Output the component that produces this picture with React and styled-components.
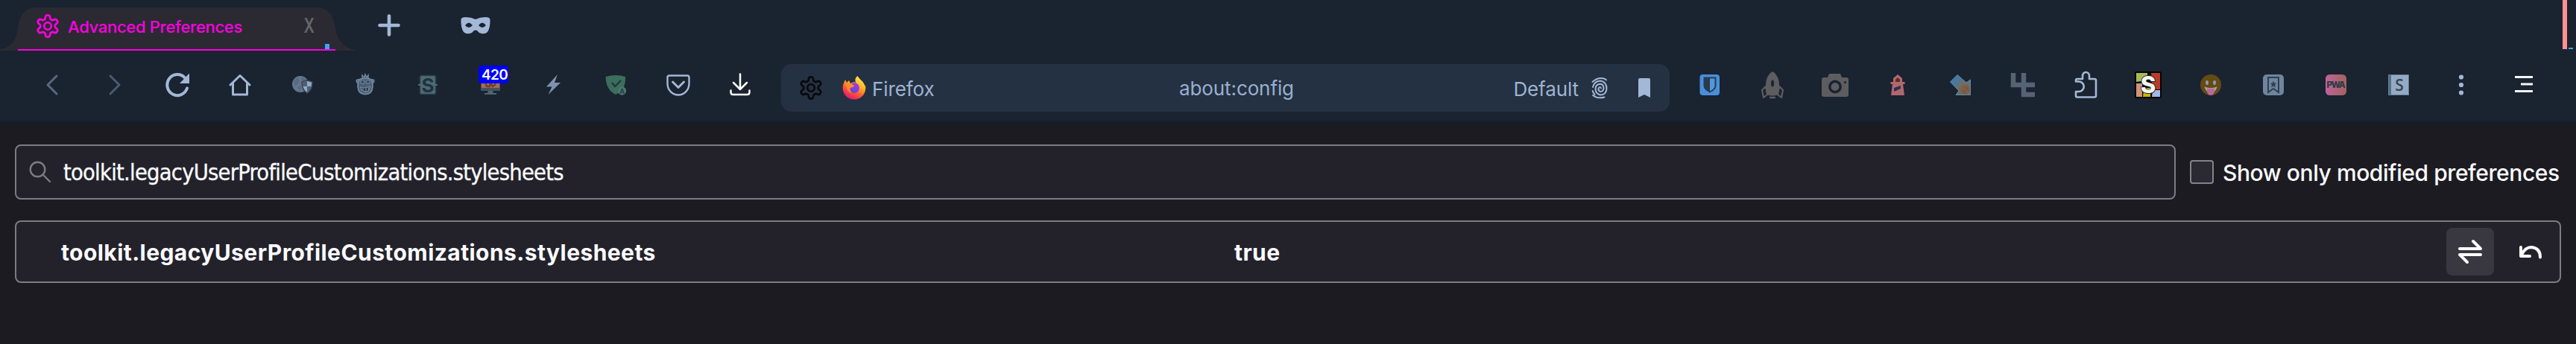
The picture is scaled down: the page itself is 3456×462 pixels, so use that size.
import React from "react";
import styled, { createGlobalStyle } from "styled-components";

const GlobalStyle = createGlobalStyle`
  * { box-sizing: border-box; }
  body { margin: 0; background: #1c1b22; overflow: hidden; font-family: Inter, "Liberation Sans", sans-serif; }
`;

const Window = styled.div`
  width: 3456px;
  height: 462px;
  background: #1c1b22;
  overflow: hidden;
`;

const TabStrip = styled.header`
  position: relative;
  display: flex;
  align-items: flex-start;
  height: 68px;
  background: #1a2330;
`;

const Tab = styled.div`
  position: relative;
  display: flex;
  align-items: center;
  width: 478px;
  height: 68px;
  padding: 2px 54px 0 44px;
  color: #ff00e0;
`;

const TabShape = styled.svg`
  position: absolute;
  left: 0;
  top: 0;
`;

const TabIcon = styled.svg`
  position: relative;
  width: 40px;
  height: 40px;
`;

const TabTitle = styled.span`
  position: relative;
  margin-left: 7px;
  padding-top: 2px;
  font-size: 22px;
  font-weight: 500;
  line-height: 30px;
  letter-spacing: -0.3px;
  white-space: nowrap;
`;

const TabClose = styled.span`
  position: relative;
  margin-left: auto;
  color: #66666a;
  font-size: 27px;
  font-weight: 600;
  line-height: 30px;
  transform: scaleX(0.74);
`;

const StripButton = styled.div`
  display: flex;
  align-items: center;
  justify-content: center;
  width: 88px;
  height: 68px;
  margin-right: ${(p) => p.$gap || 0}px;
`;

const StripEnd = styled.div`
  display: flex;
  align-items: flex-end;
  gap: 2px;
  margin-left: auto;
  padding-right: 4px;
  height: 66px;
`;

const StripMark = styled.div`
  width: 6px;
  height: ${(p) => p.$h}px;
  background: ${(p) => p.$color};
`;

const Toolbar = styled.nav`
  display: flex;
  align-items: center;
  height: 98px;
  padding: 0 28px 6px;
  background: linear-gradient(#1a2330 94px, #171d2a 94px);
`;

const ToolButton = styled.div`
  display: flex;
  align-items: center;
  justify-content: center;
  position: relative;
  flex: none;
  width: 84px;
  height: 84px;
`;

const Glyph = styled.svg`
  flex: none;
  width: 40px;
  height: 40px;
  overflow: visible;
`;

const Badge = styled.span`
  position: absolute;
  left: 26px;
  top: 16px;
  width: 40px;
  height: 24px;
  padding-left: 4px;
  overflow: hidden;
  border-radius: 4px;
  background: #0000ff;
  color: #fff;
  font-size: 19px;
  font-weight: 600;
  line-height: 25px;
  letter-spacing: -0.6px;
`;

const UrlBar = styled.div`
  display: flex;
  align-items: center;
  flex: none;
  width: 1192px;
  height: 64px;
  margin: 8px 12px 0;
  padding: 0 14px 0 20px;
  border-radius: 14px;
  background: #243142;
  color: #9fb3d1;
  font-size: 26px;
  line-height: 32px;
  letter-spacing: -0.1px;
`;

const Identity = styled.div`
  display: flex;
  align-items: center;
  flex: none;
  width: 514px;
`;

const IdentityLabel = styled.span`
  margin-left: 4px;
  padding-top: 3px;
`;

const Address = styled.span`
  padding-top: 1px;
  color: #9ab0d0;
`;

const UrlActions = styled.div`
  display: flex;
  align-items: center;
  margin-left: auto;
`;

const ContainerName = styled.span`
  padding-top: 3px;
  margin-right: 8px;
`;

const UrlIcon = styled(Glyph)`
  margin-left: ${(p) => p.$gap || 0}px;
`;

const Content = styled.main`
  padding: 28px 20px 0;
  color: #fbfbfe;
`;

const SearchRow = styled.div`
  display: flex;
  align-items: center;
  height: 74px;
`;

const SearchBox = styled.div`
  display: flex;
  align-items: center;
  flex: none;
  width: 2899px;
  height: 74px;
  padding-left: 12px;
  border: 2px solid #7c7b82;
  border-radius: 8px;
  background: #23222b;
`;

const Query = styled.span`
  margin-left: 11px;
  padding-top: 2px;
  font-family: "DejaVu Sans Condensed", "DejaVu Sans", sans-serif;
  font-stretch: condensed;
  font-size: 30.5px;
  line-height: 40px;
  letter-spacing: -0.74px;
  white-space: nowrap;
  -webkit-text-stroke: 0.3px #fbfbfe;
`;

const CheckBox = styled.span`
  flex: none;
  width: 32px;
  height: 32px;
  margin-left: 19px;
  border: 2px solid #84838a;
  border-radius: 4px;
  background: #2b2a33;
`;

const CheckLabel = styled.span`
  margin-left: 12px;
  padding-top: 2px;
  font-size: 30px;
  font-weight: 500;
  line-height: 40px;
  letter-spacing: -0.42px;
  white-space: nowrap;
`;

const PrefRow = styled.div`
  display: flex;
  align-items: center;
  height: 84px;
  margin-top: 28px;
  padding: 0 8px 0 60px;
  border: 2px solid #7c7b82;
  border-radius: 8px;
  background: #23222b;
  font-size: 30px;
  font-weight: 700;
  line-height: 40px;
  letter-spacing: 0.43px;
`;

const PrefName = styled.span`
  width: 1574px;
  padding-top: 2px;
`;

const PrefValue = styled.span`
  padding-top: 2px;
`;

const PrefActions = styled.div`
  display: flex;
  gap: 17px;
  margin-left: auto;
  margin-right: -1px;
`;

const PrefButton = styled.div`
  display: flex;
  align-items: center;
  justify-content: center;
  width: 64px;
  height: 64px;
  border-radius: 8px;
  background: ${(p) => (p.$active ? "#393841" : "transparent")};
`;

const box = "-20 -20 40 40";
const ink = "#a3b8d6";

const gearPath = (() => {
  const pts = [];
  const n = 72;
  for (let i = 0; i < n; i++) {
    const a = (i / n) * Math.PI * 2 - Math.PI / 2;
    const w = Math.cos(6 * (a + Math.PI / 2));
    const r = 12.2 + 2.5 * Math.tanh(w * 2);
    pts.push(`${(r * Math.cos(a)).toFixed(2)} ${(r * Math.sin(a)).toFixed(2)}`);
  }
  return `M${pts.join("L")}Z`;
})();

const Gear = ({ color }) => (
  <g fill="none" stroke={color} strokeWidth="2.7" strokeLinejoin="round">
    <path d={gearPath} />
    <circle r="4.8" />
  </g>
);

const Back = () => (
  <path d="M6 -12L-6 0L6 12" fill="none" stroke="#59697f" strokeWidth="3" strokeLinecap="round" strokeLinejoin="round" />
);
const Forward = () => (
  <path d="M-6 -12L6 0L-6 12" fill="none" stroke="#4a5a70" strokeWidth="3" strokeLinecap="round" strokeLinejoin="round" />
);
const Reload = () => (
  <>
    <path d="M13 4.5A13.7 14 0 1 1 10 -9.5" fill="none" stroke={ink} strokeWidth="4" strokeLinecap="round" />
    <path d="M16 -15.5V-2H3Z" fill={ink} />
  </>
);
const Home = () => (
  <path d="M-13 0L0 -12.5L13 0M-9.5 -3V13H9.5V-3" fill="none" stroke={ink} strokeWidth="3" strokeLinecap="round" strokeLinejoin="round" />
);
const Globe = () => (
  <>
    <circle cx="-3" cy="-1" r="11" fill="#63788e" />
    <path d="M-12 -5L-6 -10L-4 -4L-10 2ZM0 -11L5 -7L2 -3L-2 -6ZM-7 3L-1 1L-3 9Z" fill="#566b81" />
    <path d="M-1 -4L6 -6L13 -4C13 4 11 8 6 11C1 8 -1 4 -1 -4Z" fill="#92a9c4" stroke="#3c414b" strokeWidth="1.6" />
    <path d="M6 -5V2H0L-.3 -3.4ZM6 2H12C11 6 9 8 6 9.6Z" fill="#4c6178" />
  </>
);
const Monkey = () => (
  <g stroke="#70859c">
    <path d="M-4 -9L-4 -13L-1 -10L0 -14L2 -10L4 -13L4 -9" fill="none" strokeWidth="1.5" />
    <circle cx="-9.5" cy="-5" r="2.3" fill="#526579" strokeWidth="1.5" />
    <circle cx="9.5" cy="-5" r="2.3" fill="#526579" strokeWidth="1.5" />
    <path d="M-9.5 -3Q-9.5 -9 0 -9T9.5 -3Q10 -1 9.8 3Q9 12.5 0 12.5Q-9 12.5 -9.8 3Q-10 -1 -9.5 -3Z" fill="#4a5e73" strokeWidth="2" />
    <circle cx="-3.7" cy="-4" r="2.5" fill="#33475b" strokeWidth="1.2" />
    <circle cx="3.7" cy="-4" r="2.5" fill="#33475b" strokeWidth="1.2" />
    <path d="M-6.5 3Q0 5 6.5 2Q6 9 1 9Q-5 9 -6.5 3Z" fill="#253548" strokeWidth="1.3" />
    <path d="M-3 4V7M1 4V9M4.5 3.5V7" strokeWidth="1.2" />
  </g>
);
const Script = () => (
  <>
    <rect x="-10.5" y="-12.5" width="21" height="25" rx="2" fill="#4e6b70" stroke="#29414e" strokeWidth="1.5" />
    <path d="M-13 0H13" stroke="#4e6b70" strokeWidth="2" />
    <text y="9.5" textAnchor="middle" fontFamily="Inter" fontSize="26" fontWeight="700" fill="#203142">S</text>
  </>
);
const Monitor = () => (
  <>
    <rect x="-13" y="-11" width="26" height="19" fill="#435361" />
    <rect x="-12" y="-6" width="24" height="10" fill="#a96764" />
    <path d="M-7 -3L-5 2H-1L0 -3L3 2L6 0L7 -4" fill="none" stroke="#694324" strokeWidth="2.4" />
    <path d="M-3 8H3L4 11H8V13H-8V11H-4Z" fill="#526371" />
  </>
);
const Bolt = () => <path d="M6 -14L-9 2.5H-1.5L-6.5 13L10 -3H2Z" fill="#7f92ad" />;
const Shield = () => (
  <>
    <path d="M-13.5 -11Q0 -15 13 -11Q14 7 0 13Q-13 7 -13.5 -11Z" fill="#3b6e5b" />
    <path d="M-5 -3L-1 2L7 -6" fill="none" stroke="#253646" strokeWidth="2.4" />
    <circle cx="8.5" cy="8" r="5.7" fill="#47786b" />
    <text x="8.5" y="11.5" textAnchor="middle" fontFamily="Inter" fontSize="9" fontWeight="700" fill="#263b49">A</text>
  </>
);
const Pocket = () => (
  <g fill="none" stroke={ink} strokeLinecap="round" strokeLinejoin="round">
    <path d="M-12 -12.5H12Q14.5 -12.5 14.5 -10V-2C14.5 7 8 13.5 0 13.5S-14.5 7 -14.5 -2V-10Q-14.5 -12.5 -12 -12.5Z" strokeWidth="2.4" />
    <path d="M-7.5 -4L0 3.5L7.5 -4" strokeWidth="3" />
  </g>
);
const Download = () => (
  <path d="M-1 -14.5V5M-10 -3L-1 6L8 -3M-13.5 7.5V10Q-13.5 13 -10.5 13H8.5Q11.5 13 11.5 10V7.5" fill="none" stroke="#fff" strokeWidth="2.5" strokeLinecap="round" strokeLinejoin="round" />
);
const Bitwarden = () => (
  <>
    <rect x="-13.5" y="-14" width="26.5" height="28" rx="4" fill="#488fdb" />
    <path d="M-8.5 -10.5H8.5V1C8.5 6 3 9 0 10.5C-3 9 -8.5 6 -8.5 1Z" fill="#293b4c" />
    <path d="M0 -8.5H6.5V1C6.5 4.5 3 7 0 8.3Z" fill="#5197df" />
  </>
);
const Rocket = () => (
  <>
    <path d="M-8 13L-9 0C-9 -9 -5 -15 0 -18C5 -15 9 -9 9 0L8 13Q0 16 -8 13Z" fill="#5d5d60" />
    <ellipse cy="-2" rx="2" ry="4.5" fill="#1a2330" />
    <path d="M-9 2L-14 7L-12 17L-7 13ZM9 2L14 7L12 17L7 13Z" fill="#1a2330" stroke="#5d5d60" strokeWidth="2.2" strokeLinejoin="round" />
    <path d="M-3 17H3" stroke="#5d5d60" strokeWidth="2.4" strokeLinecap="round" />
  </>
);
const Camera = () => (
  <>
    <path d="M-15 -10H-10L-8 -15H7L9 -10H15Q18 -10 18 -7V13Q18 16 15 16H-15Q-18 16 -18 13V-7Q-18 -10 -15 -10Z" fill="#5d5d60" />
    <circle cy="2.5" r="7.2" fill="none" stroke="#1a2330" strokeWidth="3.5" />
    <circle cx="13.5" cy="-3.5" r="1.5" fill="#1a2330" />
  </>
);
const Lighthouse = () => (
  <>
    <path d="M-9 14L-7 -1H-9.5V-4H-6V-9L0 -14L6 -9V-4H9.5V-1H7L9 14Z" fill="#b16770" />
    <path d="M-3 -4V-7Q0 -12 3 -7V-4Z" fill="#51351c" />
    <path d="M-5 4L4 1V5L-5 9Z" fill="#293443" />
  </>
);
const SwiftArrow = () => (
  <>
    <defs>
      <radialGradient id="arrowFill" cx="0.75" cy="0.75" r="0.65">
        <stop offset="0" stopColor="#79502f" />
        <stop offset="0.5" stopColor="#736d64" />
        <stop offset="1" stopColor="#4779a0" />
      </radialGradient>
    </defs>
    <path d="M-13.5 -4L-4 -13.5L8 -3L13.5 -7V13.5H-6L-2 8Z" fill="url(#arrowFill)" stroke="#568bb3" strokeWidth="1" />
    <path d="M4 4L12 12" stroke="#a6653b" strokeWidth="1.5" strokeDasharray="2 1" />
  </>
);
const Pipes = () => (
  <path d="M-13 -16V0H16M1 -16V13H16M1 0" fill="none" stroke="#556375" strokeWidth="6.5" />
);
const Puzzle = () => (
  <path d="M-13 -6V-4.5H-9A5.8 5.8 0 0 1 -9 9H-13V14.5Q-13 16.5 -11 16.5H12Q14 16.5 14 14.5V-6Q14 -8 12 -8H5V-12A4.5 5 0 0 0 -4 -12V-8H-11Q-13 -8 -13 -6Z" fill="none" stroke={ink} strokeWidth="2.6" strokeLinejoin="round" />
);
const Stylus = () => (
  <>
    <rect x="-18" y="-18" width="36" height="36" rx="2" fill="#050505" />
    <path d="M-16 -16H-1V-6L-16 -4Z" fill="#a9b950" />
    <path d="M4 -16H16V6H6Z" fill="#b93b2c" />
    <path d="M-16 -2H-8V16H-16Z" fill="#d09478" />
    <path d="M6 7H16V16H5Z" fill="#a1b8e8" />
    <path d="M-6 4H3V16H-7Z" fill="#c8b700" />
    <text y="11" textAnchor="middle" fontFamily="Inter" fontSize="31" fontWeight="800" fill="#f5f5f5" stroke="#222" strokeWidth="1.8" paintOrder="stroke">S</text>
  </>
);
const Emoji = () => (
  <>
    <circle r="14" fill="#634b16" />
    <ellipse cx="-5" cy="-3" rx="2" ry="3" fill="#9a98a2" />
    <ellipse cx="5" cy="-3" rx="2" ry="3" fill="#9a98a2" />
    <path d="M-8.5 2.5Q0 6 8.5 2.5Q6 11 0 11T-8.5 2.5Z" fill="#aba5ae" />
    <path d="M-5 4.5Q0 6 5 4.5V9Q4 14 0 14T-5 9Z" fill="#bc6797" />
  </>
);
const SavedPage = () => (
  <>
    <rect x="-14" y="-14" width="28" height="28" rx="5" fill="#6e859d" />
    <path d="M-7 -10H7V10L0 5L-7 10Z" fill="none" stroke="#2f3f51" strokeWidth="2" />
    <path d="M0 -5.5L1.3 -2.2H4.3L2 0L3 3.5L0 1.5L-3 3.5L-2 0L-4.3 -2.2H-1.3Z" fill="#2f3f51" />
  </>
);
const Pwa = () => (
  <>
    <defs>
      <linearGradient id="pwaFill">
        <stop offset="0" stopColor="#bd649a" />
        <stop offset="1" stopColor="#a2635d" />
      </linearGradient>
    </defs>
    <rect x="-14" y="-14" width="28" height="28" rx="5.5" fill="url(#pwaFill)" />
    <text x="-0.5" y="4.2" textAnchor="middle" fontFamily="Inter" fontSize="11.5" fontWeight="800" letterSpacing="-1.2" fill="#2c3947">PWA</text>
  </>
);
const Notebook = () => (
  <>
    <rect x="-14" y="-14" width="28" height="28" rx="1.5" fill="#94abc6" />
    <rect x="-13.5" y="-13.5" width="3.5" height="27" fill="#4e7287" />
    <rect x="-13.5" y="-13.5" width="27" height="27" rx="1" fill="none" stroke="#667c91" strokeWidth="1" />
    <text x="1" y="7.5" textAnchor="middle" fontFamily="Open Sans" fontSize="21" fontWeight="600" fill="#354454">S</text>
  </>
);
const Dots = () => (
  <g fill={ink}>
    <circle cy="-10.5" r="3.1" />
    <circle r="3.1" />
    <circle cy="10.5" r="3.1" />
  </g>
);
const Menu = () => <path d="M-12 -10.5H12M-4 -1H12M-12 8.5H12" stroke="#f4f4f6" strokeWidth="2.8" />;

const Firefox = () => (
  <>
    <defs>
      <linearGradient id="foxBody" x1="0.8" y1="0" x2="0.25" y2="1">
        <stop offset="0" stopColor="#fff04a" />
        <stop offset="0.4" stopColor="#ffae24" />
        <stop offset="0.68" stopColor="#ff5139" />
        <stop offset="1" stopColor="#e0107a" />
      </linearGradient>
      <linearGradient id="foxCore" x1="0.7" y1="0" x2="0.2" y2="1">
        <stop offset="0" stopColor="#ad35e8" />
        <stop offset="1" stopColor="#594bd0" />
      </linearGradient>
    </defs>
    <path d="M4.5 -16C7 -11 13 -9 14.5 -2L15 -4C17 8 9 15.5 0 15.5S-17 8 -15 -4L-12 -11L-10 -7L-7 -10L-5 -6Q0 -9 2 -7Q0 -13 4.5 -16Z" fill="url(#foxBody)" />
    <circle cx="0" cy="0" r="7" fill="url(#foxCore)" />
    <path d="M-11 -5L-4 -6L0 -3Q-1 0 -5 -.5Q-7 4 -2 7Q-10 7 -11 -5Z" fill="#ff8b27" />
  </>
);
const Fingerprint = () => (
  <g fill="none" stroke={ink} strokeWidth="2" strokeLinecap="round">
    <path d="M-9.5 -8Q-4 -13 2 -13Q7 -13 9 -10.5" />
    <path d="M-9 -1Q-7 -9 1 -9.5Q9.5 -8 9.5 1Q9 9.5 1 9.5Q-5.5 8 -5.5 1Q-5 -5 1 -5.3Q5.5 -5 5.5 1Q5 5 1 5Q-2 4 -1.5 1Q0 -2.5 2 0.5" />
    <path d="M-9.3 4Q-8.5 7 -6.5 9M-9 10Q-3 15 6.5 12.5" />
  </g>
);
const Bookmark = () => <path d="M-8 -11Q-8 -13 -6 -13H6Q8 -13 8 -11V13L0 9L-8 13Z" fill={ink} />;

const leftTools = [Back, Forward, Reload, Home, Globe, Monkey, Script, Monitor, Bolt, Shield, Pocket, Download];
const rightTools = [Bitwarden, Rocket, Camera, Lighthouse, SwiftArrow, Pipes, Puzzle, Stylus, Emoji, SavedPage, Pwa, Notebook, Dots, Menu];

const Tool = ({ icon: Icon, badge }) => (
  <ToolButton>
    <Glyph viewBox={box}><Icon /></Glyph>
    {badge && <Badge>{badge}</Badge>}
  </ToolButton>
);

export default function App() {
  return (
    <Window>
      <GlobalStyle />
      <TabStrip>
        <Tab>
          <TabShape width="478" height="68">
            <path d="M0 66C18 64 22 50 24 38C26 20 34 10 50 10H422C440 10 448 20 450 38C453 56 462 64 477 67V68H0Z" fill="#2b2a33" />
            <path d="M24 67H450" stroke="#ff00e0" strokeWidth="2" />
            <path d="M436 59H442V66H436Z" fill="#3fa2f7" />
          </TabShape>
          <TabIcon viewBox={box}><Gear color="#ff00e0" /></TabIcon>
          <TabTitle>Advanced Preferences</TabTitle>
          <TabClose>X</TabClose>
        </Tab>
        <StripButton $gap={28}>
          <Glyph viewBox={box}>
            <path d="M-12.5 0H12.5M0 -12.5V12.5" stroke={ink} strokeWidth="4.6" strokeLinecap="round" />
          </Glyph>
        </StripButton>
        <StripButton>
          <Glyph viewBox={box}>
            <path fillRule="evenodd" d="M-19.5 -8Q-19 -11 -13 -11Q-6 -11 0 -8Q6 -11 13 -11Q19 -11 19.5 -8Q20 3 16 9Q13 12 8 11Q4 10 2 7Q0 6 -2 7Q-4 10 -8 11Q-13 12 -16 9Q-20 3 -19.5 -8ZM-14 0Q-9 6 -4 0Q-9 -7 -14 0ZM4 0Q9 6 14 0Q9 -7 4 0Z" fill={ink} />
          </Glyph>
        </StripButton>
        <StripEnd>
          <StripMark $h={66} $color="#ff9090" />
          <StripMark $h={2} $color="#3fa2f7" />
        </StripEnd>
      </TabStrip>

      <Toolbar>
        {leftTools.map((icon, i) => (
          <Tool key={i} icon={icon} badge={icon === Monitor ? "420" : undefined} />
        ))}
        <UrlBar>
          <Identity>
            <UrlIcon viewBox={box}><Gear color="#07090c" /></UrlIcon>
            <UrlIcon viewBox={box} $gap={18}><Firefox /></UrlIcon>
            <IdentityLabel>Firefox</IdentityLabel>
          </Identity>
          <Address>about:config</Address>
          <UrlActions>
            <ContainerName>Default</ContainerName>
            <UrlIcon viewBox={box}><Fingerprint /></UrlIcon>
            <UrlIcon viewBox={box} $gap={20}><Bookmark /></UrlIcon>
          </UrlActions>
        </UrlBar>
        {rightTools.map((icon, i) => (
          <Tool key={i} icon={icon} />
        ))}
      </Toolbar>

      <Content>
        <SearchRow>
          <SearchBox>
            <Glyph viewBox={box}>
              <g fill="none" stroke="#7c7b82" strokeWidth="2.4" strokeLinecap="round">
                <circle cx="-3.5" cy="-3.5" r="9.8" />
                <path d="M4 4L13 13" />
              </g>
            </Glyph>
            <Query>toolkit.legacyUserProfileCustomizations.stylesheets</Query>
          </SearchBox>
          <CheckBox />
          <CheckLabel>Show only modified preferences</CheckLabel>
        </SearchRow>
        <PrefRow>
          <PrefName>toolkit.legacyUserProfileCustomizations.stylesheets</PrefName>
          <PrefValue>true</PrefValue>
          <PrefActions>
            <PrefButton $active>
              <Glyph viewBox={box}>
                <path d="M-14 -4H14L4 -14M14 4H-14L-4 14" fill="none" stroke="#fbfbfe" strokeWidth="4" strokeLinecap="round" strokeLinejoin="round" />
              </Glyph>
            </PrefButton>
            <PrefButton>
              <Glyph viewBox={box}>
                <path d="M-13 -6V6H-1M-12 4Q-7 -6 1 -6Q13 -5 13 7.5" fill="none" stroke="#fbfbfe" strokeWidth="4" strokeLinecap="round" strokeLinejoin="round" />
              </Glyph>
            </PrefButton>
          </PrefActions>
        </PrefRow>
      </Content>
    </Window>
  );
}
